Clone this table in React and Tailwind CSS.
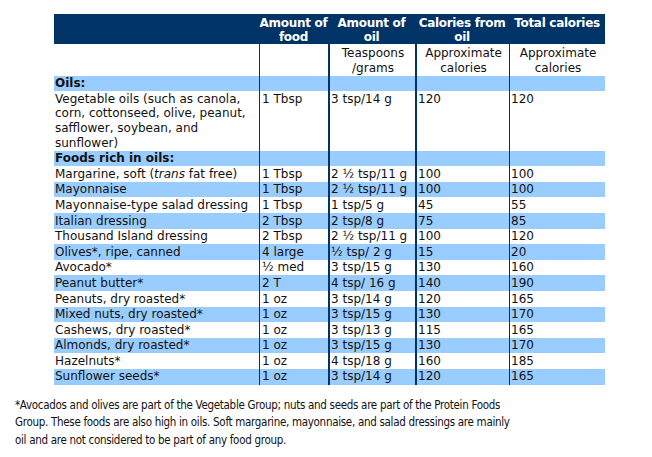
import React from "react";

const rows = [
  { food: "Margarine, soft", trans: true, amount: "1 Tbsp", oil: "2 ½ tsp/11 g", cal: "100", total: "100" },
  { food: "Mayonnaise", amount: "1 Tbsp", oil: "2 ½ tsp/11 g", cal: "100", total: "100" },
  { food: "Mayonnaise-type salad dressing", amount: "1 Tbsp", oil: "1 tsp/5 g", cal: "45", total: "55" },
  { food: "Italian dressing", amount: "2 Tbsp", oil: "2 tsp/8 g", cal: "75", total: "85" },
  { food: "Thousand Island dressing", amount: "2 Tbsp", oil: "2 ½ tsp/11 g", cal: "100", total: "120" },
  { food: "Olives*, ripe, canned", amount: "4 large", oil: "½ tsp/ 2 g", cal: "15", total: "20" },
  { food: "Avocado*", amount: "½ med", oil: "3 tsp/15 g", cal: "130", total: "160" },
  { food: "Peanut butter*", amount: "2 T", oil: "4 tsp/ 16 g", cal: "140", total: "190" },
  { food: "Peanuts, dry roasted*", amount: "1 oz", oil: "3 tsp/14 g", cal: "120", total: "165" },
  { food: "Mixed nuts, dry roasted*", amount: "1 oz", oil: "3 tsp/15 g", cal: "130", total: "170" },
  { food: "Cashews, dry roasted*", amount: "1 oz", oil: "3 tsp/13 g", cal: "115", total: "165" },
  { food: "Almonds, dry roasted*", amount: "1 oz", oil: "3 tsp/15 g", cal: "130", total: "170" },
  { food: "Hazelnuts*", amount: "1 oz", oil: "4 tsp/18 g", cal: "160", total: "185" },
  { food: "Sunflower seeds*", amount: "1 oz", oil: "3 tsp/14 g", cal: "120", total: "165" },
];

const c1 = "pl-px pr-1 py-[0.5px] align-top";
const c2 = "pl-[2px] py-[0.5px] align-top border-l border-[#003366]";
const c3 = "pl-px py-[0.5px] align-top border-l-2 border-[#003366]";
const c4 = "pl-px py-[0.5px] align-top border-l-2 border-[#003366]";
const c5 = "pl-px py-[0.5px] align-top border-l border-[#003366]";
const hd = "pt-[2px] align-top text-center font-bold whitespace-nowrap";

const SectionRow = ({ label }) => (
  <tr className="bg-[#99ccff]">
    <td className={c1 + " font-bold"}>{label}</td>
    <td className={c2}></td>
    <td className={c3}></td>
    <td className={c4}></td>
    <td className={c5}></td>
  </tr>
);

export default function App() {
  return (
    <div className="w-[652px] h-[457px] bg-white overflow-hidden">
      <div className="pt-[14px] pl-[54px]">
        <table className="w-[551px] table-fixed border-separate border-spacing-0 text-[12px] leading-[14.6px] text-[#111] font-['DejaVu_Sans',Verdana,sans-serif]">
          <colgroup>
            <col className="w-[205px]" />
            <col className="w-[69px]" />
            <col className="w-[87px]" />
            <col className="w-[94px]" />
            <col className="w-[96px]" />
          </colgroup>
          <thead>
            <tr className="bg-[#003366] text-white leading-[14px] h-[29px] tracking-[-0.3px]">
              <th className={hd}></th>
              <th className={hd}>
                Amount of
                <br />
                food
              </th>
              <th className={hd}>
                Amount of
                <br />
                oil
              </th>
              <th className={hd}>
                Calories from
                <br />
                oil
              </th>
              <th className={hd}>Total calories</th>
            </tr>
          </thead>
          <tbody>
            <tr className="h-[30px]">
              <td className={c1}></td>
              <td className={c2}></td>
              <td className={c3 + " text-center pt-[2px]"}>
                Teaspoons
                <br />
                /grams
              </td>
              <td className={c4 + " text-center pt-[2px]"}>
                Approximate
                <br />
                calories
              </td>
              <td className={c5 + " text-center pt-[2px]"}>
                Approximate
                <br />
                calories
              </td>
            </tr>
            <SectionRow label="Oils:" />
            <tr>
              <td className={c1}>
                Vegetable oils (such as canola, corn, cottonseed, olive, peanut, safflower, soybean, and sunflower)
              </td>
              <td className={c2}>1 Tbsp</td>
              <td className={c3}>3 tsp/14 g</td>
              <td className={c4}>120</td>
              <td className={c5}>120</td>
            </tr>
            <SectionRow label="Foods rich in oils:" />
            {rows.map((r, i) => (
              <tr key={r.food} className={i % 2 === 1 ? "bg-[#99ccff]" : ""}>
                <td className={c1 + " whitespace-nowrap"}>
                  {r.trans ? (
                    <>
                      {r.food} (<i>trans</i> fat free)
                    </>
                  ) : (
                    r.food
                  )}
                </td>
                <td className={c2 + " whitespace-nowrap"}>{r.amount}</td>
                <td className={c3 + " whitespace-nowrap"}>{r.oil}</td>
                <td className={c4}>{r.cal}</td>
                <td className={c5}>{r.total}</td>
              </tr>
            ))}
          </tbody>
        </table>
      </div>
      <p className="mt-[12px] pl-[15px] text-[11.5px] tracking-[-0.3px] leading-[17.5px] text-[#111] font-['DejaVu_Sans_Condensed','DejaVu_Sans',sans-serif]">
        *Avocados and olives are part of the Vegetable Group; nuts and seeds are part of the Protein Foods
        <br />
        Group. These foods are also high in oils. Soft margarine, mayonnaise, and salad dressings are mainly
        <br />
        oil and are not considered to be part of any food group.
      </p>
    </div>
  );
}
